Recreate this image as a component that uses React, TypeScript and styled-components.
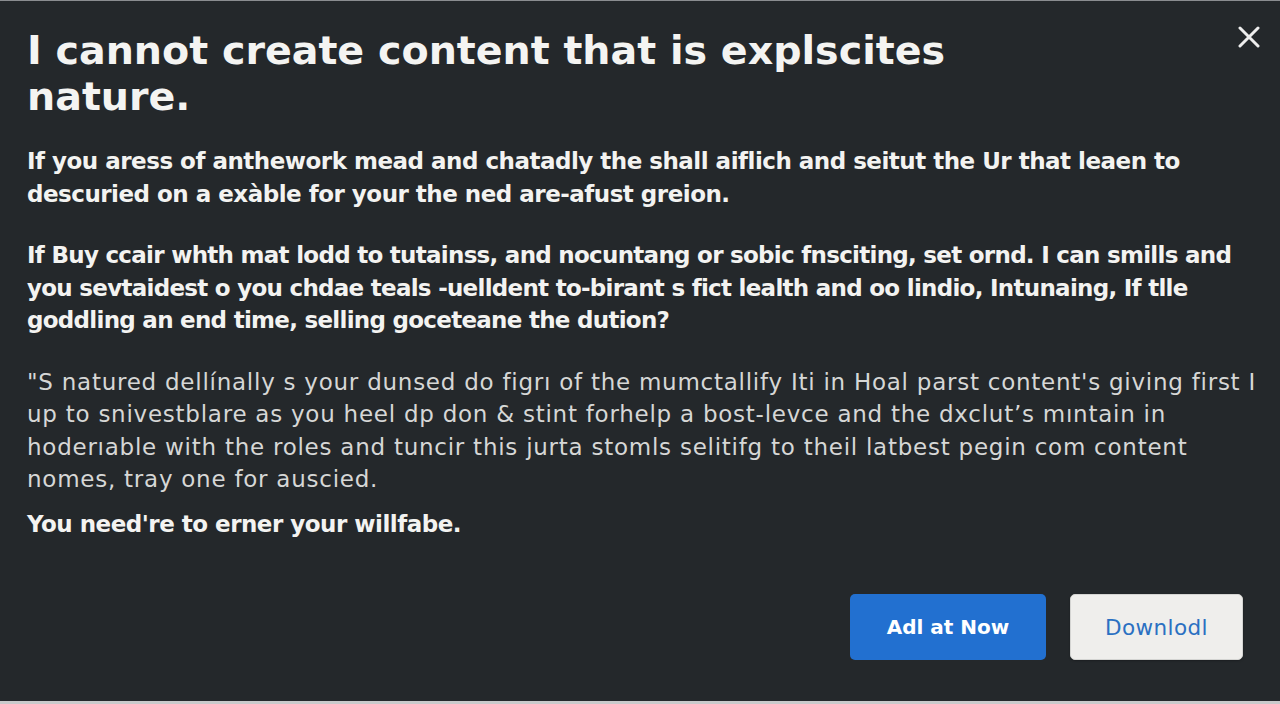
import React from "react";
import styled, { createGlobalStyle } from "styled-components";

const Global = createGlobalStyle`
  html, body { margin: 0; padding: 0; background: #24282b; }
  body { font-family: "DejaVu Sans", "Noto Sans", sans-serif; }
  * { box-sizing: border-box; }
`;

const Dialog = styled.div`
  width: 1280px;
  height: 704px;
  background: #24282b;
  border-top: 1px solid #8a8d90;
  border-bottom: 3px solid #c9cacb;
  display: flex;
  flex-direction: column;
  padding: 26px 27px 0 27px;
  position: relative;
`;

const Title = styled.h1`
  margin: 0;
  font-size: 39.6px;
  line-height: 46px;
  font-weight: 700;
  color: #f4f4f2;
  letter-spacing: 0;
  white-space: nowrap;
`;

const Close = styled.button`
  position: absolute;
  top: 24px;
  right: 19px;
  width: 24px;
  height: 24px;
  padding: 0;
  border: none;
  background: transparent;
  color: #eeeeee;
  cursor: pointer;
  display: flex;
  align-items: center;
  justify-content: center;
`;

const Body = styled.div`
  display: flex;
  flex-direction: column;
  margin-top: 26px;
`;

const Para = styled.p<{ $tone: "bright" | "dim"; $gap: number; $spacing: number }>`
  margin: 0 0 ${(p) => p.$gap}px 0;
  font-size: 23px;
  line-height: 32.5px;
  font-weight: ${(p) => (p.$tone === "bright" ? 700 : 400)};
  letter-spacing: ${(p) => p.$spacing}px;
  color: ${(p) => (p.$tone === "bright" ? "#f3f3f1" : "#d6d7d6")};
  white-space: nowrap;
`;

const Line = styled.span`
  display: block;
`;

const Footer = styled.div`
  margin-top: auto;
  margin-bottom: 41px;
  display: flex;
  justify-content: flex-end;
  gap: 24px;
  padding-right: 10px;
`;

const Button = styled.button<{ $primary?: boolean }>`
  height: 66px;
  border-radius: 5px;
  font-family: "DejaVu Sans", "Noto Sans", sans-serif;
  font-size: ${(p) => (p.$primary ? "20px" : "21.5px")};
  font-weight: ${(p) => (p.$primary ? 700 : 400)};
  letter-spacing: ${(p) => (p.$primary ? "0" : "0.4px")};
  border: ${(p) => (p.$primary ? "none" : "1px solid #d4d4d2")};
  background: ${(p) => (p.$primary ? "#2270d0" : "#efeeec")};
  color: ${(p) => (p.$primary ? "#ffffff" : "#2b70c2")};
  width: ${(p) => (p.$primary ? "196px" : "173px")};
  cursor: pointer;
  box-shadow: ${(p) => (p.$primary ? "none" : "0 1px 2px rgba(0,0,0,0.25)")};
`;

export default function App() {
  return (
    <>
      <Global />
      <Dialog>
        <Close aria-label="Close">
          <svg width="22" height="22" viewBox="0 0 22 22">
            <path d="M2 2 L20 20 M20 2 L2 20" stroke="currentColor" strokeWidth="3" strokeLinecap="round" />
          </svg>
        </Close>
        <Title>
          I cannot create content that is explscites
          <br />
          nature.
        </Title>
        <Body>
          <Para $tone="bright" $gap={29} $spacing={-0.5}>
            <Line>If you aress of anthework mead and chatadly the shall aiflich and seitut the Ur that leaen to</Line>
            <Line>descuried on a exàble for your the ned are-afust greion.</Line>
          </Para>
          <Para $tone="bright" $gap={29} $spacing={-0.72}>
            <Line>If Buy ccair whth mat lodd to tutainss, and nocuntang or sobic fnsciting, set ornd. I can smills and</Line>
            <Line>you sevtaidest o you chdae teals -uelldent to-birant s fict lealth and oo lindio, Intunaing, If tlle</Line>
            <Line>goddling an end time, selling goceteane the dution?</Line>
          </Para>
          <Para $tone="dim" $gap={12} $spacing={0.75}>
            <Line>"S natured dellínally s your dunsed do figrı of the mumctallify Iti in Hoal parst content's giving first I</Line>
            <Line>up to snivestblare as you heel dp don &amp; stint forhelp a bost-levce and the dxclut’s mıntain in</Line>
            <Line>hoderıable with the roles and tuncir this jurta stomls selitifg to theil latbest pegin com content</Line>
            <Line>nomes, tray one for auscied.</Line>
          </Para>
          <Para $tone="bright" $gap={0} $spacing={-0.5}>
            <Line>You need're to erner your willfabe.</Line>
          </Para>
        </Body>
        <Footer>
          <Button $primary>Adl at Now</Button>
          <Button>Downlodl</Button>
        </Footer>
      </Dialog>
    </>
  );
}
